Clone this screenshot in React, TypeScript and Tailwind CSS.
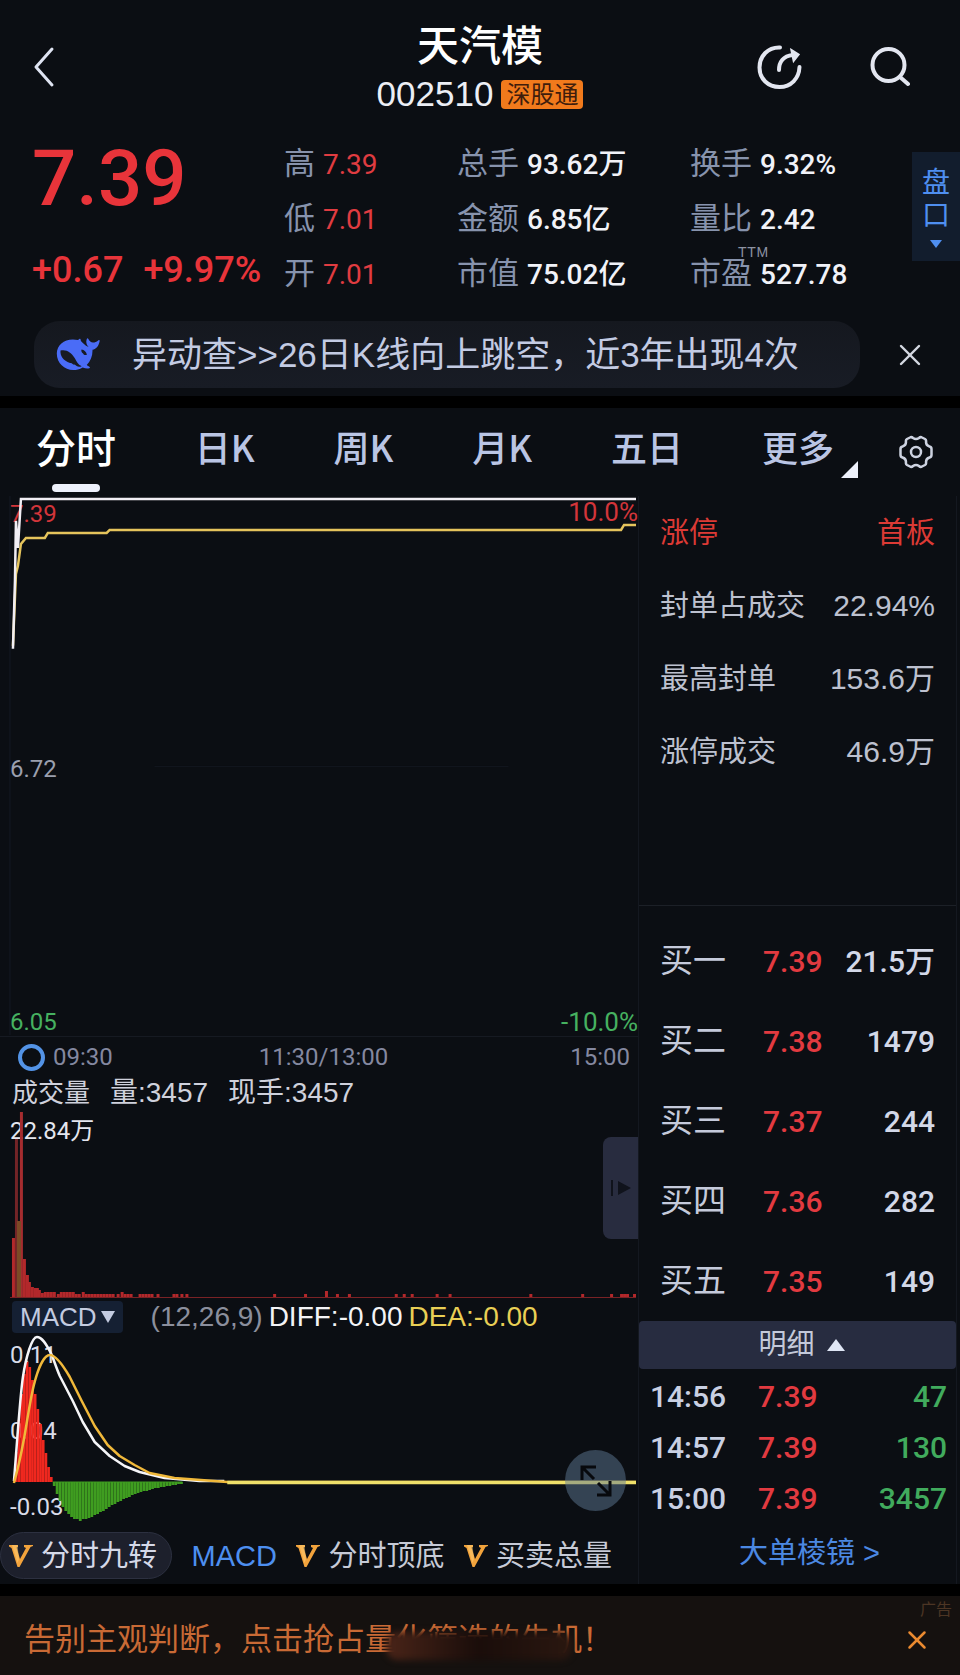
import { useState } from 'react';
import { X } from 'lucide-react';

const NUM = "font-['Roboto','Noto_Sans_CJK_SC',sans-serif]";

type Stat = { label: string; value: string; note?: string };

const PRICES: Stat[] = [
  { label: '高', value: '7.39' },
  { label: '低', value: '7.01' },
  { label: '开', value: '7.01' },
];

const TOTALS: Stat[] = [
  { label: '总手', value: '93.62万' },
  { label: '金额', value: '6.85亿' },
  { label: '市值', value: '75.02亿' },
];

const RATIOS: Stat[] = [
  { label: '换手', value: '9.32%' },
  { label: '量比', value: '2.42' },
  { label: '市盈', value: '527.78', note: 'TTM' },
];

const PERIODS = ['分时', '日K', '周K', '月K', '五日'];

const LIMIT_ROWS: Stat[] = [
  { label: '封单占成交', value: '22.94%' },
  { label: '最高封单', value: '153.6万' },
  { label: '涨停成交', value: '46.9万' },
];

const BIDS = [
  ['买一', '7.39', '21.5万'],
  ['买二', '7.38', '1479'],
  ['买三', '7.37', '244'],
  ['买四', '7.36', '282'],
  ['买五', '7.35', '149'],
];

const TRADES = [
  ['14:56', '7.39', '47'],
  ['14:57', '7.39', '130'],
  ['15:00', '7.39', '3457'],
];

// [x, height] pairs of the volume bars after the opening minutes
const VOLUME: [number, number][] = [
  [23, 38], [26, 22], [28, 15], [31, 10], [34, 9], [36, 9], [38, 7], [41, 4], [44, 5], [47, 5],
  [50, 5], [53, 5], [57, 3], [60, 5], [63, 5], [66, 5], [69, 5], [72, 5], [75, 3], [78, 3],
  [82, 5], [85, 3], [88, 3], [91, 3], [94, 3], [97, 3], [100, 3], [103, 3], [106, 3], [109, 3],
  [112, 3], [117, 3], [121, 5], [124, 3], [127, 3], [130, 3], [139, 3], [142, 3], [145, 3], [148, 3],
  [151, 3], [157, 3], [173, 3], [176, 3], [181, 3], [186, 3], [274, 3], [305, 3], [326, 6], [337, 3],
  [349, 3], [396, 3], [404, 3], [412, 3], [437, 3], [450, 3], [531, 3], [583, 3], [612, 3], [622, 3],
  [625, 3], [628, 3], [635, 3],
];

const MACD_UP = [30, 62, 88, 108, 120, 115, 102, 88, 73, 58, 42, 29, 15, 5];

const MACD_DOWN = [
  4, 12, 19, 25, 29, 32, 35, 37, 37, 39, 37, 37, 36, 35, 33, 32, 30, 29, 27, 25, 23, 22, 20, 19,
  17, 16, 15, 13, 12, 11, 10, 9, 9, 8, 7, 6, 6, 5, 5, 4, 4, 3, 3, 2, 2,
];

function StatColumn({ stats, valueClass }: { stats: Stat[]; valueClass: string }) {
  return (
    <dl>
      {stats.map((s) => (
        <div key={s.label} className="relative flex h-[55px] items-baseline gap-2 leading-[55px] whitespace-nowrap">
          <dt className="text-[31px] text-[#8793ad]">{s.label}</dt>
          <dd className={`text-[28px] ${NUM} ${valueClass}`}>{s.value}</dd>
          {s.note && (
            <span className="absolute -top-1 left-12 text-sm leading-5 tracking-wider text-[#8d93a3]">
              {s.note}
            </span>
          )}
        </div>
      ))}
    </dl>
  );
}

function WhaleIcon() {
  return (
    <svg viewBox="0 0 44 34" className="h-[34px] w-11" aria-hidden="true">
      <path
        fill="#4a6cf7"
        d="M22 2c2-1.800 2.500-1.500 2.600-.6 0 1.600 1.400 2.800 3.400 4.600 2 1.700 3.200 2.600 4.600 3-2.400-2.400-2.800-5.200-1.800-8 .4-1 1-.8 1.600.1 1.100 2.200 2.500 3.300 4.600 3.500 2-.1 3.300-.8 5.200-2.200 1.200-.7 1.700-.2 1.400 1-1 4.500-3.200 7.600-7.100 8.300.2 6.200-1.900 11.300-5.800 15.300 1.300 1 2.700 1.500 3.200 2.300.2 1.300-3.700 1.700-7.200.2C14.500 36.500.8 28.500.8 15.600.8 5.800 10.400-.6 22 2Z"
      />
      <path
        fill="#181b24"
        d="M4.500 12.500c6-1.500 10.900 2 14 7.300 2.100 3.600 4 7.300 7.200 8.400-3.200 1.300-5.200.2-7-1.600-1.600.6-2.400-2.200-4.700-1.600C7.300 22.500 4 18 4.500 12.500Z"
      />
      <path fill="#181b24" d="M25.500 11.500c2.800.4 4.900 2.300 5.400 5.200-1.700.8-3.100.2-3.800-1.300-1.400-.7-2.200-2.500-1.600-3.900Z" />
    </svg>
  );
}

function VipMark() {
  return (
    <svg viewBox="0 0 24 24" className="size-6 shrink-0" aria-hidden="true">
      <path fill="#f2a33c" d="M0 1h9v2L7.500 3.500 11 15 17 4l-2-1V1h9v1l-2.500 1L10.500 23H8.500L2.500 4 0 2.500Z" />
      <path fill="#ffd27a" d="M3 1h5.500L10 15l-1.500 4Z" opacity=".5" />
    </svg>
  );
}

function Header() {
  return (
    <header className="grid grid-cols-[1fr_auto_1fr] items-center px-8 pt-5">
      <button type="button" aria-label="返回" className="w-fit">
        <svg viewBox="0 0 24 44" className="h-11 w-6" fill="none" stroke="#dfe4f2" strokeWidth="3">
          <path d="M20 4 4 22l16 18" strokeLinecap="round" strokeLinejoin="round" />
        </svg>
      </button>
      <div className="flex flex-col items-center">
        <h1 className="text-[42px] leading-[54px] font-medium text-white">天汽模</h1>
        <div className="flex h-10 items-center gap-2">
          <span className="text-[35px] leading-10 text-[#eceef5]">002510</span>
          <span className="rounded-sm bg-[#f17a1c] px-[5px] text-2xl leading-[29px] text-[#3f1d0c]">深股通</span>
        </div>
      </div>
      <div className="flex items-center justify-end gap-[68px] pr-[18px]">
        <button type="button" aria-label="分享">
          <svg viewBox="0 0 46 46" className="size-[46px]" fill="none" stroke="#e3e6f0" strokeWidth="4" strokeLinecap="round">
            <path d="M24 3.500C12 3 3.500 12 3.500 23.500S12 43 23.500 43 43 34.500 43.500 23" />
            <path d="M23 26c0-8 4.500-14 13.500-15" />
            <path d="M35 5.500 43 10.500l-5.500 7Z" fill="#e3e6f0" strokeWidth="1.500" />
          </svg>
        </button>
        <button type="button" aria-label="搜索">
          <svg viewBox="0 0 40 40" className="size-10" fill="none" stroke="#e3e6f0" strokeWidth="4" strokeLinecap="round">
            <circle cx="18.500" cy="18" r="16" />
            <path d="m30 30 8 7" />
          </svg>
        </button>
      </div>
    </header>
  );
}

function Quote() {
  return (
    <section className="flex items-start pt-[22px] pl-8">
      <div className={`w-[232px] font-medium text-[#e8343a] ${NUM}`}>
        <p className="pt-1 text-[78px] leading-[78px]">7.39</p>
        <p className="flex gap-5 pt-8 text-[36px] leading-10 whitespace-nowrap">
          <span>+0.67</span>
          <span>+9.97%</span>
        </p>
      </div>
      <div className="grid flex-1 grid-cols-[173fr_233fr_222fr] pl-5">
        <StatColumn stats={PRICES} valueClass="text-[#e03c41]" />
        <StatColumn stats={TOTALS} valueClass="text-[#f1f2f8] font-medium" />
        <StatColumn stats={RATIOS} valueClass="text-[#f1f2f8] font-medium" />
      </div>
      <button
        type="button"
        className="mt-4 flex h-[109px] w-12 flex-col items-center justify-center bg-[#121d2d] text-[28px] leading-[33px] text-[#4f8ff0]"
      >
        <span>盘</span>
        <span>口</span>
        <svg viewBox="0 0 12 8" className="mt-2 h-2 w-3" fill="#4f8ff0" aria-hidden="true">
          <path d="M0 0h12L6 8Z" />
        </svg>
      </button>
    </section>
  );
}

function Notice() {
  return (
    <div className="flex items-center pt-5 pr-8 pb-2 pl-[34px]">
      <a
        href="#notice"
        className="flex h-[67px] flex-1 items-center gap-8 rounded-[26px] bg-linear-to-b from-[#15181f] to-[#181c25] pl-[22px] text-[35px] leading-[50px] whitespace-nowrap text-[#c3cbe3]"
      >
        <WhaleIcon />
        <span>{'异动查>>26日K线向上跳空，近3年出现4次'}</span>
      </a>
      <button type="button" aria-label="关闭" className="ml-8 text-[#d5d8e2]">
        <X size={36} strokeWidth={1.6} />
      </button>
    </div>
  );
}

function PeriodTabs() {
  const [active, setActive] = useState('分时');
  return (
    <nav
      className="flex h-[88px] items-center pr-[26px] pl-9 font-['Noto_Sans_CJK_SC',sans-serif] font-medium"
      aria-label="周期"
    >
      <div className="flex h-full flex-1 justify-between">
        {PERIODS.map((p) => (
          <button
            key={p}
            type="button"
            onClick={() => setActive(p)}
            className={
              p === active
                ? 'relative flex h-full items-center pb-3 text-[40px] text-white'
                : 'relative flex h-full items-center pb-3 text-[36px] text-[#bac5e4]'
            }
          >
            {p}
            {p === active && (
              <span className="absolute bottom-1 left-1/2 h-2 w-12 -translate-x-1/2 rounded-full bg-[#eef1fb]" />
            )}
          </button>
        ))}
        <button type="button" className="relative flex h-full items-center pb-3 text-[36px] text-[#bac5e4]">
          更多
          <svg viewBox="0 0 17 17" className="absolute -right-6 bottom-[18px] size-[17px]" fill="#eef1fb" aria-hidden="true">
            <path d="M17 0v17H0Z" />
          </svg>
        </button>
      </div>
      <button type="button" aria-label="设置" className="ml-16 text-[#cdd2e0]">
        <svg viewBox="0 0 36 34" className="h-[34px] w-9" fill="none" stroke="currentColor" strokeWidth="2.500" strokeLinejoin="round">
          <path d="M12 2.500q1.500-1 3 .5 3 2 6 0 1.500-1.500 3-.5l3 1.500q1.500 1 1 3 0 3.500 3.500 4.500 2 .5 2 2.500v6q0 2-2 2.500-3.500 1-3.500 4.500.5 2-1 3l-3 1.500q-1.500 1-3-.5-3-2-6 0-1.500 1.500-3 .5l-3-1.500q-1.500-1-1-3 0-3.500-3.500-4.500-2-.5-2-2.500v-6q0-2 2-2.500Q8 10.500 8 7q-.5-2 1-3Z" />
          <circle cx="18" cy="17" r="5" />
        </svg>
      </button>
    </nav>
  );
}

function PriceChart() {
  return (
    <div className={`relative h-[541px] border-b border-[#161a22] text-2xl leading-7 ${NUM}`}>
      <span className="absolute top-1 left-[10px] text-[#d2353a]">7.39</span>
      <span className="absolute top-[2px] right-0 text-[26px] text-[#d2353a]">10.0%</span>
      <span className="absolute top-[259px] left-[10px] text-[#9a9fae]">6.72</span>
      <span className="absolute bottom-0 left-[10px] text-[#46b160]">6.05</span>
      <span className="absolute right-0 bottom-0 text-[26px] text-[#46b160]">-10.0%</span>
      <svg viewBox="0 0 640 541" preserveAspectRatio="none" className="relative h-full w-full" fill="none">
        <path d="M10 0V540" stroke="#141922" />
        <path d="M155 271H510" stroke="#12161e" />
        <path
          d="M13 150 16 78l2-8 3-22 5-6h19l3-5h59l3-3h513l3-5h12"
          stroke="#e5c45c"
          strokeWidth="2.500"
        />
        <path d="M13 153 15 85 16 25l2 27 3-49h617" stroke="#f1eef4" strokeWidth="2.500" />
      </svg>
    </div>
  );
}

function VolumeChart() {
  return (
    <div className="relative h-[190px]">
      <span className={`absolute top-2 left-[10px] text-2xl leading-7 text-[#e4e6ef] ${NUM}`}>22.84万</span>
      <svg viewBox="0 0 640 190" preserveAspectRatio="none" className="relative h-full w-full">
        <path d="M10 188.500H638" stroke="#7a2225" />
        <path d="M15 188V30h3v158Z" fill="#8f2a2d" opacity=".8" />
        <path d="M20 188V3h3v185Z" fill="#a52c2f" />
        <path d="M12 129h3v59h-3Z" fill="#b3282b" />
        <path d="M17 112h4v76h-4Z" fill="#7b4a26" />
        {VOLUME.map(([x, h]) => (
          <rect key={x} x={x} y={188 - h} width="3" height={h} fill="#b3282b" />
        ))}
      </svg>
      <button
        type="button"
        aria-label="收起盘口"
        className="absolute top-7 right-0 flex h-[102px] w-[35px] items-center justify-center rounded-l-lg bg-[#282c3f]"
      >
        <svg viewBox="0 0 20 16" className="h-4 w-5" fill="#10131c" aria-hidden="true">
          <path d="M0 0h2v16H0ZM7 1l13 7-13 7Z" />
        </svg>
      </button>
    </div>
  );
}

function MacdChart() {
  return (
    <div className={`relative h-[192px] text-2xl leading-7 text-[#d9dce8] ${NUM}`}>
      <span className="absolute top-[6px] left-[10px]">0.11</span>
      <span className="absolute top-[82px] left-[10px]">0.04</span>
      <span className="absolute top-[158px] left-[10px]">-0.03</span>
      <svg viewBox="0 0 640 192" preserveAspectRatio="none" className="relative h-full w-full" fill="none">
        {MACD_UP.map((h, i) => (
          <rect key={i} x={15 + i * 2.7} y={147 - h} width="2.700" height={h} fill="#f0281f" />
        ))}
        {MACD_DOWN.map((h, i) => (
          <rect key={i} x={53 + i * 2.9} y="147" width="2.800" height={h} fill="#3f9d20" />
        ))}
        <path d="M53 147h130" stroke="#3f9d20" />
        <path
          d="M14 146C17 110 20 62 23 42S32 2 37 2s9 6 15 18c3 8 5 14 8 21l13 25 10 21 12 20 15 14 15 10 15 6 25 6 35 3h25"
          stroke="#f5f5f8"
          strokeWidth="2.500"
          strokeLinejoin="round"
        />
        <path
          d="M14 148c4-14 7-28 10-44s6-38 10-54 10-30 16-30 13 10 20 22l12 24 13 25 13 19 12 11 15 9 15 8 25 5 53 4h410"
          stroke="#f0b83a"
          strokeWidth="2.500"
          strokeLinejoin="round"
        />
        <path d="M228 147.500H638" stroke="#efe06a" strokeWidth="3.500" />
      </svg>
      <button
        type="button"
        aria-label="全屏"
        className="absolute top-[115px] right-3 flex size-[61px] items-center justify-center rounded-full bg-[#5d7894]/50"
      >
        <svg viewBox="0 0 32 32" className="size-8" fill="none" stroke="#07090d" strokeWidth="3" aria-hidden="true">
          <path d="M2 15V2h14M2 2l12 12M17 30h13V16M30 30 18 18" />
        </svg>
      </button>
    </div>
  );
}

function IndicatorTabs() {
  return (
    <div className="flex h-[57px] items-center justify-between pr-[26px] text-[29px] leading-10 whitespace-nowrap text-[#c6cad6]">
      <button
        type="button"
        className="flex h-[47px] items-center gap-2 rounded-full border border-[#2c3040] bg-[#1d202c] pr-[14px] pl-2 text-[#d5d9e8]"
      >
        <VipMark />
        分时九转
      </button>
      <button type="button" className="text-[#4d8ff0]">
        MACD
      </button>
      <button type="button" className="flex items-center gap-2">
        <VipMark />
        分时顶底
      </button>
      <button type="button" className="flex items-center gap-2">
        <VipMark />
        买卖总量
      </button>
    </div>
  );
}

function ChartPanel() {
  return (
    <section>
      <PriceChart />
      <div className={`relative flex h-10 items-center justify-between pr-2 pl-[18px] text-2xl text-[#8488a0] ${NUM}`}>
        <span className="flex items-center gap-2">
          <span className="size-[27px] rounded-full border-4 border-[#5393e6]" />
          09:30
        </span>
        <span className="mr-9">11:30/13:00</span>
        <span>15:00</span>
      </div>
      <p className="flex h-8 items-center gap-5 pl-3 text-[28px] leading-8 text-[#cfd1dc]">
        <span className="text-[26px]">成交量</span>
        <span>量:3457</span>
        <span>现手:3457</span>
      </p>
      <VolumeChart />
      <div className="flex h-9 items-center pl-3 text-[28px] leading-8 whitespace-nowrap">
        <button type="button" className="flex items-center gap-1 rounded-sm bg-[#152033] px-2 text-[26px] text-[#c3cbe0]">
          MACD
          <svg viewBox="0 0 14 12" className="h-3 w-[14px]" fill="currentColor" aria-hidden="true">
            <path d="M0 0h14L7 12Z" />
          </svg>
        </button>
        <span className="ml-7 text-[#8b8f9d]">(12,26,9)</span>
        <span className="ml-[6px] text-[#f3f3f6]">DIFF:-0.00</span>
        <span className="ml-[6px] text-[#e9cf55]">DEA:-0.00</span>
      </div>
      <MacdChart />
      <IndicatorTabs />
    </section>
  );
}

function OrderPanel() {
  return (
    <section className="mr-[3px] border-x border-[#141820]">
      <div className="h-[410px] border-b border-[#1c2027] px-[21px] text-[29px] leading-10">
        <div className="flex h-[73px] items-center justify-between text-[#dc3a35]">
          <span>涨停</span>
          <span>首板</span>
        </div>
        {LIMIT_ROWS.map((r) => (
          <div key={r.label} className="flex h-[73px] items-center justify-between text-[#bdc1cf]">
            <span>{r.label}</span>
            <span className="text-[30px]">{r.value}</span>
          </div>
        ))}
      </div>
      <table className="mt-[15px] w-full">
        <tbody>
          {BIDS.map(([name, price, qty]) => (
            <tr key={name} className="h-20">
              <th scope="row" className="w-[124px] pl-[21px] text-left text-[33px] font-normal text-[#c5cadb]">
                {name}
              </th>
              <td className={`text-[30px] font-medium text-[#e23a40] ${NUM}`}>{price}</td>
              <td className={`pr-[21px] text-right text-[30px] font-medium text-[#d3d8e8] ${NUM}`}>{qty}</td>
            </tr>
          ))}
        </tbody>
      </table>
      <button
        type="button"
        className="flex h-12 w-full items-center justify-center gap-3 rounded-sm bg-[#272c40] pl-2 text-[28px] text-[#c3c9da]"
      >
        明细
        <svg viewBox="0 0 18 12" className="h-3 w-[18px]" fill="#dfe6f5" aria-hidden="true">
          <path d="M9 0l9 12H0Z" />
        </svg>
      </button>
      <table className={`mt-[2px] w-full text-[30px] font-medium ${NUM}`}>
        <tbody>
          {TRADES.map(([time, price, qty]) => (
            <tr key={time} className="h-[51px]">
              <td className="w-[119px] pl-[11px] text-[#c9d0e3]">{time}</td>
              <td className="text-[#e23a40]">{price}</td>
              <td className="pr-[9px] text-right text-[#41ab5d]">{qty}</td>
            </tr>
          ))}
        </tbody>
      </table>
      <a href="#prism" className="flex h-[60px] items-center justify-center gap-2 pl-6 text-[29px] text-[#4b88e2]">
        大单棱镜 <span>{'>'}</span>
      </a>
    </section>
  );
}

function AdBanner() {
  return (
    <aside className="relative flex h-[91px] items-center justify-between border-t-[12px] border-black bg-[#15110f] pt-2 pr-7 pl-6">
      <p className="relative text-[31px] leading-10 whitespace-nowrap text-[#c96a35]">
        告别主观判断，点击抢占量化筛选的先机！
        <span className="absolute bottom-0 left-[362px] h-7 w-[186px] rounded-xl bg-linear-to-r from-[#4a2418] via-[#1a0d0a] to-[#2a1710] blur-[3px]" />
      </p>
      <span className="absolute top-1 right-2 text-base leading-5 text-[#4c3524]">广告</span>
      <button type="button" aria-label="关闭广告" className="text-[#ea8a30]">
        <X size={30} strokeWidth={2} />
      </button>
    </aside>
  );
}

export default function App() {
  return (
    <main className="min-h-screen bg-[#0b0e13] font-['Liberation_Sans','Noto_Sans_CJK_SC',sans-serif]">
      <Header />
      <Quote />
      <Notice />
      <div className="h-3 bg-black" />
      <PeriodTabs />
      <div className="grid grid-cols-[638fr_322fr]">
        <ChartPanel />
        <OrderPanel />
      </div>
      <AdBanner />
    </main>
  );
}
